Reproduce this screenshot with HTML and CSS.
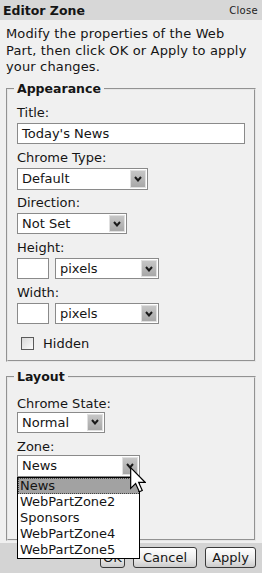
FILE: index.html
```html
<!DOCTYPE html>
<html>
	<head>
		<meta charset="utf-8" />
		<title>Editor Zone</title>
		<link rel="stylesheet" href="styles.css">
	</head>
	<body>
		<div class="zone">
			<div class="zone-head">
				<span class="zone-title">Editor Zone</span>
				<span class="zone-close">Close</span>
			</div>

			<div class="zone-body">
				<p class="intro">Modify the properties of the Web Part, then click OK or Apply to apply your changes.</p>

				<fieldset class="group">
					<legend>Appearance</legend>
					<label class="field-label first">Title:</label>
					<div class="textbox w-title">Today's News</div>

					<label class="field-label">Chrome Type:</label>
					<div class="select w-chrome tall">
						<span class="select-value">Default</span>
						<span class="select-btn"><svg width="8" height="6" viewBox="0 0 8 6"><polyline points="1,1 4,4.5 7,1" fill="none" stroke="#1a1a1a" stroke-width="2"/></svg></span>
					</div>

					<label class="field-label snug">Direction:</label>
					<div class="select w-dir">
						<span class="select-value">Not Set</span>
						<span class="select-btn"><svg width="8" height="6" viewBox="0 0 8 6"><polyline points="1,1 4,4.5 7,1" fill="none" stroke="#1a1a1a" stroke-width="2"/></svg></span>
					</div>

					<label class="field-label">Height:</label>
					<div class="size-row">
						<div class="textbox w-num"></div>
						<div class="select w-unit">
							<span class="select-value">pixels</span>
							<span class="select-btn"><svg width="8" height="6" viewBox="0 0 8 6"><polyline points="1,1 4,4.5 7,1" fill="none" stroke="#1a1a1a" stroke-width="2"/></svg></span>
						</div>
					</div>

					<label class="field-label">Width:</label>
					<div class="size-row">
						<div class="textbox w-num"></div>
						<div class="select w-unit">
							<span class="select-value">pixels</span>
							<span class="select-btn"><svg width="8" height="6" viewBox="0 0 8 6"><polyline points="1,1 4,4.5 7,1" fill="none" stroke="#1a1a1a" stroke-width="2"/></svg></span>
						</div>
					</div>

					<div class="check-row">
						<span class="checkbox"></span>
						<span>Hidden</span>
					</div>
				</fieldset>

				<fieldset class="group layout">
					<legend>Layout</legend>
					<label class="field-label first tight">Chrome State:</label>
					<div class="select w-state">
						<span class="select-value">Normal</span>
						<span class="select-btn"><svg width="8" height="6" viewBox="0 0 8 6"><polyline points="1,1 4,4.5 7,1" fill="none" stroke="#1a1a1a" stroke-width="2"/></svg></span>
					</div>

					<label class="field-label tight">Zone:</label>
					<div class="zone-pick">
						<div class="select w-zone tall">
							<span class="select-value">News</span>
							<span class="select-btn"><svg width="8" height="6" viewBox="0 0 8 6"><polyline points="1,1 4,4.5 7,1" fill="none" stroke="#1a1a1a" stroke-width="2"/></svg></span>
						</div>
						<ul class="dropdown">
							<li class="active">News</li>
							<li>WebPartZone2</li>
							<li>Sponsors</li>
							<li>WebPartZone4</li>
							<li>WebPartZone5</li>
						</ul>
					</div>
				</fieldset>
			</div>

			<div class="zone-foot">
				<button class="btn btn-ok">OK</button>
				<button class="btn btn-cancel">Cancel</button>
				<button class="btn btn-apply">Apply</button>
			</div>

			<svg class="cursor" width="16" height="26" viewBox="0 0 12 19.5">
				<polygon points="0.5,0.5 0.5,16 4.2,12.4 7,18.6 9.2,17.6 6.5,11.6 11.5,11.6" fill="#fff" stroke="#000" stroke-width="0.9"/>
			</svg>
		</div>
	</body>
</html>
```

FILE: styles.css
```css
*{
	margin: 0;
	padding: 0;
	box-sizing: border-box;
}

html,body{
	width: 100%;
	height: 100%;
	overflow: hidden;
}

body{
	font-family: "DejaVu Sans", Verdana, sans-serif;
	font-size: 13px;
	color: #151515;
	background-color: #f0f0f0;
}

.zone{
	position: relative;
	display: flex;
	flex-direction: column;
	width: 262px;
	height: 573px;
}

.zone-head{
	display: flex;
	justify-content: space-between;
	align-items: center;
	height: 20px;
	padding: 1px 4px 0 3px;
	background-color: #d7d7d7;
}

.zone-title{
	font-size: 12.5px;
	font-weight: bold;
}

.zone-close{
	font-size: 10px;
	letter-spacing: 0.3px;
	color: #222;
}

.zone-body{
	flex: 1;
	padding: 6px 6px 2px;
}

.intro{
	width: 245px;
	line-height: 16.5px;
	letter-spacing: 0.15px;
	margin-bottom: 5px;
}

.group{
	border: 2px groove #e6e6e6;
	padding: 8.5px 9px 8.5px;
}

.group + .group{
	margin-top: 7px;
}

.group legend{
	font-size: 12.5px;
	font-weight: bold;
	line-height: 16px;
	padding: 0 3px;
	margin-left: -3px;
}

/* the open list below Zone hides the rest of this group */
.layout{
	padding-top: 10.5px;
	padding-bottom: 62.5px;
}

.field-label{
	display: block;
	line-height: 16px;
	margin-top: 6px;
	margin-bottom: 2px;
}

.field-label.first{
	margin-top: 0;
}

.field-label.snug{
	margin-top: 5px;
}

.field-label.tight{
	margin-bottom: 0;
}

.textbox{
	height: 21px;
	line-height: 19px;
	padding: 0 4px;
	border: 1px solid #8a8a8a;
	background-color: #fff;
}

.select{
	display: flex;
	height: 21px;
	border: 1px solid #8a8a8a;
	background-color: #fff;
}

.tall{
	height: 22px;
}

.select-value{
	flex: 1;
	padding-left: 4px;
	line-height: 19px;
}

.tall .select-value{
	line-height: 20px;
}

.select-btn{
	display: flex;
	align-items: center;
	justify-content: center;
	width: 16px;
	margin: 1px;
	border: 1px solid #e0e0e0;
	background: linear-gradient(#c6c6c6, #a8a8a8);
}

.w-title{ width: 228px; }
.w-chrome{ width: 131px; }
.w-dir{ width: 110px; }
.w-num{ width: 32px; }
.w-unit{ width: 104px; }
.w-state{ width: 88px; }
.w-zone{ width: 123px; }

.size-row{
	display: flex;
	gap: 6px;
}

.check-row{
	display: flex;
	align-items: center;
	gap: 9px;
	height: 16px;
	line-height: 16px;
	margin-top: 11.5px;
	padding-left: 4px;
}

.checkbox{
	width: 13px;
	height: 13px;
	border: 1px solid #5a5a5a;
	background: linear-gradient(135deg, #d8d8d8, #fbfbfb);
}

.zone-pick{
	position: relative;
}

.dropdown{
	position: absolute;
	top: 100%;
	left: 0;
	z-index: 2;
	width: 123px;
	list-style: none;
	border: 1px solid #000;
	background-color: #fff;
}

.dropdown li{
	line-height: 16px;
	padding-left: 2px;
}

.dropdown .active{
	background-color: #a2a2a2;
	outline: 1px dotted #444;
	outline-offset: -1px;
}

.zone-foot{
	display: flex;
	justify-content: flex-end;
	gap: 8px;
	height: 30px;
	padding: 4px 6px 0;
	background-color: #d4d4d4;
}

.btn{
	height: 21px;
	font-family: "DejaVu Sans", Verdana, sans-serif;
	font-size: 13px;
	color: #151515;
	border: 1px solid #3a3a3a;
	border-radius: 3px;
	background: linear-gradient(#ffffff, #ececec 55%, #cbcbcb);
}

.btn-ok{ width: 25px; }
.btn-cancel{ width: 64px; }
.btn-apply{ width: 51px; }

.cursor{
	position: absolute;
	left: 130px;
	top: 467px;
	z-index: 3;
}
```
